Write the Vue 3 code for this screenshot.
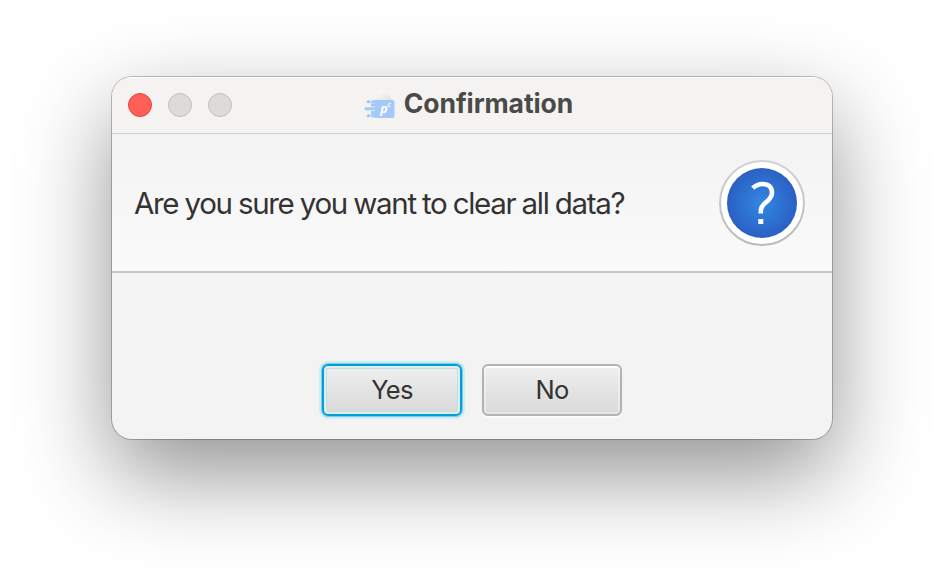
<script setup>
const title = 'Confirmation'
const message = 'Are you sure you want to clear all data?'
const lights = ['close', 'minimize', 'zoom']
</script>

<template>
  <main class="desktop">
    <section class="window" role="dialog" :aria-label="title">
      <header class="titlebar">
        <div class="lights">
          <span v-for="light in lights" :key="light" class="light" :class="light"></span>
        </div>
        <div class="caption">
          <svg class="app-icon" width="32" height="32" viewBox="0 0 32 32">
            <defs>
              <linearGradient id="fold" x1="0" y1="0" x2="1" y2="1">
                <stop offset="0.3" stop-color="#f8f8f7" />
                <stop offset="1" stop-color="#dededd" />
              </linearGradient>
            </defs>
            <path d="M8 14 17 2Q19 .5 21 3L29 14Z" fill="url(#fold)" />
            <path d="M11 13H28.500Q30.500 13 30.500 15V29Q30.500 31 28.500 31H11V27.500H7V24H11V19.500H7V16.500H11Z" fill="#a4c8fa" />
            <path d="M4 14.800H5.200M8.500 14.800H12M2 21.800H13M4 28.800H5.200M8.500 28.800H12" fill="none" stroke="#a4c8fa" stroke-width="3" stroke-linecap="round" />
            <text class="mark" x="16.200" y="25.500">p</text>
            <text class="mark small" x="23.500" y="19.500">c</text>
          </svg>
          <h1 class="title">{{ title }}</h1>
        </div>
      </header>
      <div class="header-panel">
        <p class="message">{{ message }}</p>
        <svg class="question" width="88" height="88" viewBox="0 0 88 88">
          <defs>
            <radialGradient id="disc">
              <stop offset="0" stop-color="#3388e2" />
              <stop offset="1" stop-color="#2a60c3" />
            </radialGradient>
            <linearGradient id="ring" x1="0" y1="0" x2="0" y2="1">
              <stop offset="0" stop-color="#d2d2d2" />
              <stop offset="1" stop-color="#bababa" />
            </linearGradient>
          </defs>
          <circle cx="44" cy="44" r="42" fill="#fff" stroke="url(#ring)" stroke-width="2" />
          <circle cx="44" cy="44" r="35" fill="url(#disc)" />
          <path d="M34.800 29.200C37.500 26.500 40.500 25 44.500 25C50.500 25 54 28.200 54 33.500C54 38 51.500 40.500 47.500 43.800C44 46.700 42.800 48.500 42.800 52V54.500" fill="none" stroke="#fff" stroke-width="4.600" />
          <rect x="40.300" y="60" width="5" height="5" fill="#fff" />
        </svg>
      </div>
      <div class="content"></div>
      <footer class="actions">
        <button class="btn focused">Yes</button>
        <button class="btn">No</button>
      </footer>
    </section>
  </main>
</template>

<style>
body {
  background: #fff;
  overflow: hidden;
}
</style>

<style scoped>
.desktop {
  box-sizing: border-box;
  width: 944px;
  height: 588px;
  padding: 77px 112px 0;
  overflow: hidden;
  font-family: Inter, "Liberation Sans", sans-serif;
  color: #333;
}
.window {
  display: flex;
  flex-direction: column;
  width: 720px;
  height: 362px;
  border-radius: 20px;
  overflow: hidden;
  background: #f3f3f3;
  box-shadow: 0 0 0 1px rgba(0, 0, 0, 0.24), 0 35px 90px rgba(0, 0, 0, 0.43);
}
.titlebar {
  display: grid;
  grid-template-columns: 1fr auto 1fr;
  align-items: center;
  box-sizing: border-box;
  height: 57px;
  padding: 0 16px;
  background: #f5f3f1;
  border-bottom: 1px solid #cfcfcd;
  box-shadow: inset 0 1px #fff;
}
.lights {
  display: flex;
  gap: 16px;
}
.light {
  box-sizing: border-box;
  width: 24px;
  height: 24px;
  border-radius: 50%;
  background: #dcdbda;
  border: 1px solid #c0bfbe;
}
.light.close {
  background: #ff5f57;
  border-color: #e2463f;
}
.caption {
  display: flex;
  align-items: center;
  gap: 8px;
  padding: 0 7px 4px 0;
}
.app-icon {
  display: block;
}
.mark {
  font: italic 700 12.5px "Open Sans", sans-serif;
  fill: #fff;
}
.small {
  font-size: 7px;
}
.title {
  margin: 0;
  font-size: 26.5px;
  line-height: 32px;
  font-weight: 700;
  letter-spacing: -0.1px;
  color: #4a4a48;
  white-space: nowrap;
}
.header-panel {
  display: flex;
  align-items: center;
  justify-content: space-between;
  box-sizing: border-box;
  height: 139px;
  padding: 0 26px 0 22px;
  background: linear-gradient(#f3f3f3, #fafafa);
  border-bottom: 2px solid #c7c7c7;
}
.message {
  margin: 0;
  font-size: 29.5px;
  line-height: 36px;
  letter-spacing: -1.34px;
  word-spacing: -0.6px;
  white-space: nowrap;
}
.question {
  display: block;
}
.content {
  flex: 1;
}
.actions {
  display: flex;
  justify-content: center;
  gap: 20px;
  padding-bottom: 23px;
}
.btn {
  box-sizing: border-box;
  width: 140px;
  height: 52px;
  padding: 0 0 1px;
  border: 2px solid #b2b2b2;
  border-radius: 6px;
  background: linear-gradient(#efefef, #d9d9d9);
  box-shadow: inset 0 0 0 2px rgba(255, 255, 255, 0.35), inset 0 2px #fdfdfd, 0 2px #fbfbfb;
  font-family: inherit;
  font-size: 25.5px;
  letter-spacing: -0.7px;
  color: #333;
}
.btn.focused {
  border-color: #039ed3;
  box-shadow: inset 0 0 0 2px #dceef2, inset 0 0 0 3px #c3dfe5, 0 0 0 1px #7bcde7, 0 0 0 3px #d0edf5;
}
</style>
